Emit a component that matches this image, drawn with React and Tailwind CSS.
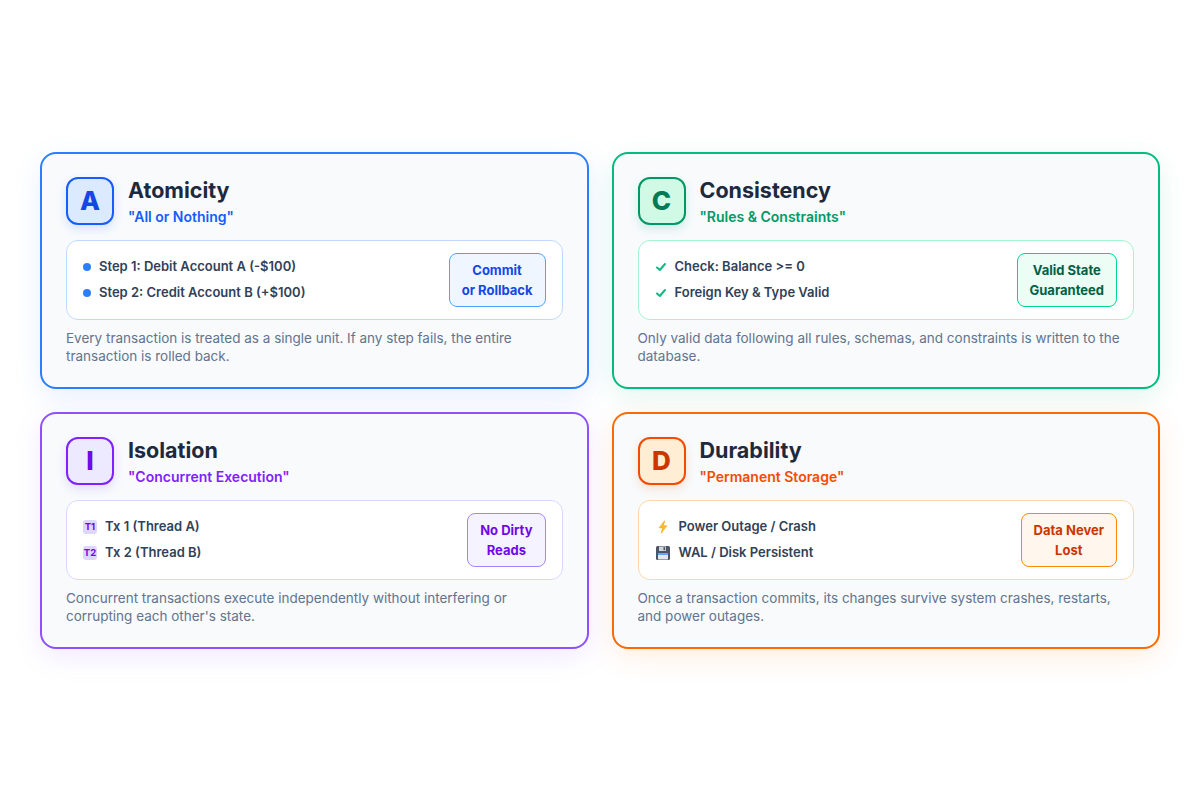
import React from "react";

function Bolt() {
  return (
    <svg width="14" height="14" viewBox="0 0 16 16">
      <path d="M9.5 1 L3.5 9 H7.5 L6 15 L12.5 6.5 H8.5 L10 1 Z" fill="#fbbf24" stroke="#f59e0b" strokeWidth="0.6" strokeLinejoin="round" />
    </svg>
  );
}

function Floppy() {
  return (
    <svg width="16" height="16" viewBox="0 0 16 16">
      <rect x="1" y="1" width="14" height="14" rx="1.5" fill="#4b5563" />
      <rect x="4" y="1.5" width="7" height="4.5" fill="#d1d5db" />
      <rect x="8.5" y="2.2" width="1.6" height="3" fill="#4b5563" />
      <rect x="3" y="8.5" width="10" height="6" fill="#e5e7eb" />
      <rect x="3" y="8.5" width="10" height="1.5" fill="#60a5fa" />
    </svg>
  );
}

function Check() {
  return (
    <svg width="12" height="12" viewBox="0 0 12 12">
      <path d="M2 6.5 L4.8 9 L10 3" fill="none" stroke="#10b981" strokeWidth="2" strokeLinecap="round" strokeLinejoin="round" />
    </svg>
  );
}

const cards = [
  {
    letter: "A",
    title: "Atomicity",
    subtitle: '"All or Nothing"',
    card: "border-blue-500 shadow-[0_8px_28px_rgba(59,130,246,0.12)]",
    box: "border-blue-600 bg-blue-100 text-blue-700 shadow-[0_4px_10px_rgba(59,130,246,0.18)]",
    sub: "text-blue-600",
    inner: "border-blue-200",
    badge: "border-blue-400 bg-blue-50 text-blue-700",
    badgeLines: ["Commit", "or Rollback"],
    items: [
      { icon: <span className="w-2 h-2 rounded-full bg-blue-500" />, text: "Step 1: Debit Account A (-$100)" },
      { icon: <span className="w-2 h-2 rounded-full bg-blue-500" />, text: "Step 2: Credit Account B (+$100)" },
    ],
    desc: "Every transaction is treated as a single unit. If any step fails, the entire transaction is rolled back.",
  },
  {
    letter: "C",
    title: "Consistency",
    subtitle: '"Rules & Constraints"',
    card: "border-emerald-500 shadow-[0_8px_28px_rgba(16,185,129,0.12)]",
    box: "border-emerald-600 bg-emerald-100 text-emerald-700 shadow-[0_4px_10px_rgba(16,185,129,0.18)]",
    sub: "text-emerald-600",
    inner: "border-emerald-200",
    badge: "border-emerald-400 bg-emerald-50 text-emerald-800",
    badgeLines: ["Valid State", "Guaranteed"],
    items: [
      { icon: <Check />, text: "Check: Balance >= 0" },
      { icon: <Check />, text: "Foreign Key & Type Valid" },
    ],
    desc: "Only valid data following all rules, schemas, and constraints is written to the database.",
  },
  {
    letter: "I",
    title: "Isolation",
    subtitle: '"Concurrent Execution"',
    card: "border-violet-500 shadow-[0_8px_28px_rgba(139,92,246,0.12)]",
    box: "border-violet-600 bg-violet-100 text-violet-700 shadow-[0_4px_10px_rgba(139,92,246,0.18)]",
    sub: "text-violet-600",
    inner: "border-violet-200",
    badge: "border-violet-400 bg-violet-50 text-violet-700",
    badgeLines: ["No Dirty", "Reads"],
    items: [
      { icon: <span className="w-[14px] h-[14px] rounded-[3px] bg-violet-200 text-violet-700 text-[9.5px] font-bold flex items-center justify-center leading-none">T1</span>, text: "Tx 1 (Thread A)" },
      { icon: <span className="w-[14px] h-[14px] rounded-[3px] bg-violet-200 text-violet-700 text-[9.5px] font-bold flex items-center justify-center leading-none">T2</span>, text: "Tx 2 (Thread B)" },
    ],
    desc: "Concurrent transactions execute independently without interfering or corrupting each other's state.",
  },
  {
    letter: "D",
    title: "Durability",
    subtitle: '"Permanent Storage"',
    card: "border-orange-500 shadow-[0_8px_28px_rgba(249,115,22,0.12)]",
    box: "border-orange-600 bg-orange-100 text-orange-700 shadow-[0_4px_10px_rgba(249,115,22,0.18)]",
    sub: "text-orange-600",
    inner: "border-orange-200",
    badge: "border-orange-400 bg-orange-50 text-orange-700",
    badgeLines: ["Data Never", "Lost"],
    items: [
      { icon: <span className="w-4 flex justify-center"><Bolt /></span>, text: "Power Outage / Crash" },
      { icon: <span className="w-4 flex justify-center"><Floppy /></span>, text: "WAL / Disk Persistent" },
    ],
    desc: "Once a transaction commits, its changes survive system crashes, restarts, and power outages.",
  },
];

function Card({ c }) {
  return (
    <div className={`rounded-2xl border-2 bg-slate-50 px-6 pt-[23px] pb-[21px] ${c.card}`}>
      <div className="flex items-start gap-[14px]">
        <div className={`w-12 h-12 rounded-xl border-2 flex items-center justify-center text-[26px] font-extrabold ${c.box}`}>
          {c.letter}
        </div>
        <div className="flex flex-col">
          <div className="text-[21.5px] leading-[26px] font-bold text-slate-800">{c.title}</div>
          <div className={`mt-1 text-[14px] leading-[20px] font-semibold ${c.sub}`}>{c.subtitle}</div>
        </div>
      </div>
      <div className={`mt-[13px] rounded-xl border bg-white px-4 py-3 flex items-center justify-between ${c.inner}`}>
        <div className="flex flex-col">
          {c.items.map((it, i) => (
            <div key={i} className="flex items-center gap-2 h-[26px]">
              {it.icon}
              <span className="text-[13px] font-semibold text-slate-700">{it.text}</span>
            </div>
          ))}
        </div>
        <div className={`rounded-lg border px-3 py-1.5 text-center text-[13px] leading-[20px] font-bold ${c.badge}`}>
          {c.badgeLines[0]}
          <br />
          {c.badgeLines[1]}
        </div>
      </div>
      <p className="mt-[9px] text-[13.5px] leading-[18.5px] text-slate-500">{c.desc}</p>
    </div>
  );
}

export default function App() {
  return (
    <div
      className="w-full h-[800px] bg-white flex items-center justify-center"
      style={{ fontFamily: "Inter, 'Noto Sans', sans-serif" }}
    >
      <div className="grid grid-cols-2 gap-[23px] w-[1120px]">
        {cards.map((c) => (
          <Card key={c.letter} c={c} />
        ))}
      </div>
    </div>
  );
}
